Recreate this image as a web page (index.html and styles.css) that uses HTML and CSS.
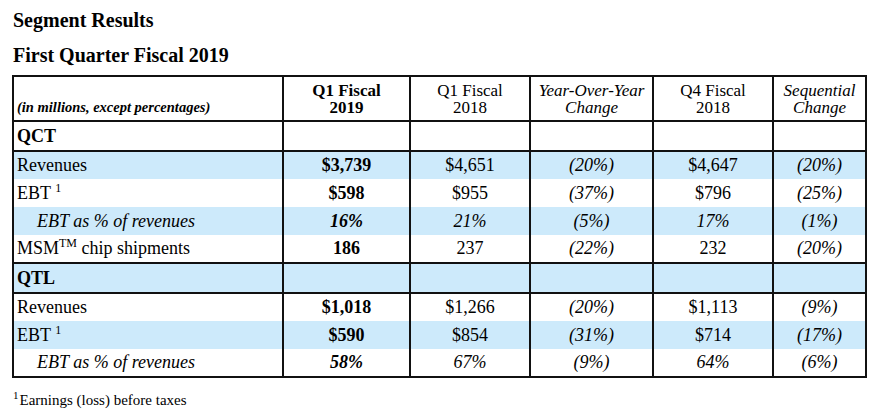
FILE: index.html
```html
<!DOCTYPE html>
<html>
<head>
<meta charset="utf-8">
<link rel="stylesheet" href="styles.css">
</head>
<body>
<h1 class="title t1">Segment Results</h1>
<h2 class="title t2">First Quarter Fiscal 2019</h2>
<table class="seg">
  <colgroup>
    <col class="c-label">
    <col class="c-a">
    <col class="c-b">
    <col class="c-c">
    <col class="c-d">
    <col class="c-e">
  </colgroup>
  <thead>
    <tr class="head">
      <th class="lbl"><span class="units">(in millions, except percentages)</span></th>
      <th class="b">Q1 Fiscal<br>2019</th>
      <th>Q1 Fiscal<br>2018</th>
      <th class="i">Year-Over-Year<br>Change</th>
      <th>Q4 Fiscal<br>2018</th>
      <th class="i">Sequential<br>Change</th>
    </tr>
  </thead>
  <tbody>
    <tr class="section">
      <td class="lbl b">QCT</td><td></td><td></td><td></td><td></td><td></td>
    </tr>
    <tr class="blue">
      <td class="lbl">Revenues</td><td class="b">$3,739</td><td>$4,651</td><td class="i">(20%)</td><td>$4,647</td><td class="i">(20%)</td>
    </tr>
    <tr>
      <td class="lbl">EBT <sup>1</sup></td><td class="b">$598</td><td>$955</td><td class="i">(37%)</td><td>$796</td><td class="i">(25%)</td>
    </tr>
    <tr class="blue">
      <td class="lbl indent i">EBT as % of revenues</td><td class="b i">16%</td><td class="i">21%</td><td class="i">(5%)</td><td class="i">17%</td><td class="i">(1%)</td>
    </tr>
    <tr>
      <td class="lbl">MSM<sup class="tm">TM</sup> chip shipments</td><td class="b">186</td><td>237</td><td class="i">(22%)</td><td>232</td><td class="i">(20%)</td>
    </tr>
    <tr class="section blue">
      <td class="lbl b">QTL</td><td></td><td></td><td></td><td></td><td></td>
    </tr>
    <tr>
      <td class="lbl">Revenues</td><td class="b">$1,018</td><td>$1,266</td><td class="i">(20%)</td><td>$1,113</td><td class="i">(9%)</td>
    </tr>
    <tr class="blue">
      <td class="lbl">EBT <sup>1</sup></td><td class="b">$590</td><td>$854</td><td class="i">(31%)</td><td>$714</td><td class="i">(17%)</td>
    </tr>
    <tr>
      <td class="lbl indent i">EBT as % of revenues</td><td class="b i">58%</td><td class="i">67%</td><td class="i">(9%)</td><td class="i">64%</td><td class="i">(6%)</td>
    </tr>
  </tbody>
</table>
<p class="foot"><sup>1</sup>Earnings (loss) before taxes</p>
</body>
</html>
```

FILE: styles.css
```css
html, body {
  margin: 0;
  padding: 0;
  background: #fff;
}
body {
  font-family: "Liberation Serif", "Times New Roman", serif;
  color: #000;
  padding: 8px 0 0 12px;
}
.title {
  font-size: 20px;
  font-weight: bold;
  line-height: 24px;
  margin: 0;
  padding-left: 1px;
}
.t2 {
  margin-top: 11px;
}
.seg {
  margin-top: 8px;
  border-collapse: collapse;
  table-layout: fixed;
  width: 855px;
  font-size: 18px;
}
.c-label { width: 270px; }
.c-a { width: 127px; }
.c-b { width: 120px; }
.c-c { width: 123px; }
.c-d { width: 120px; }
.c-e { width: 93px; }

.seg th, .seg td {
  border-left: 2px solid #111;
  border-right: 2px solid #111;
  text-align: center;
  white-space: nowrap;
  box-sizing: border-box;
}
.seg td {
  height: 28px;
  line-height: 20px;
  padding: 0 3px 1px;
  vertical-align: middle;
}
.seg .head th {
  font-size: 17px;
  font-weight: normal;
  line-height: 17px;
  height: 45px;
  vertical-align: bottom;
  padding: 0 3px 4px;
  border-top: 2px solid #111;
  border-bottom: 2px solid #111;
}
.seg .head th.b { font-weight: bold; }
.seg .head th.i { font-style: italic; }
.seg th.lbl {
  text-align: left;
}
.units {
  font-size: 14.5px;
  font-weight: bold;
  font-style: italic;
}
.seg td.lbl {
  text-align: left;
  padding-left: 3px;
}
.seg td.indent {
  padding-left: 23px;
}
.b { font-weight: bold; }
.i { font-style: italic; }
.blue td {
  background: #cdeafb;
}
.section td {
  border-top: 2px solid #111;
  border-bottom: 2px solid #111;
  height: 30px;
}
.seg tbody tr:last-child td {
  border-bottom: 2px solid #111;
}
sup {
  font-size: 12px;
  line-height: 0;
  vertical-align: 7px;
}
.foot {
  margin: 13px 0 0 1px;
  font-size: 15px;
  line-height: 18px;
}
.foot sup {
  font-size: 11px;
  vertical-align: 6px;
  margin-right: 1px;
}
```
